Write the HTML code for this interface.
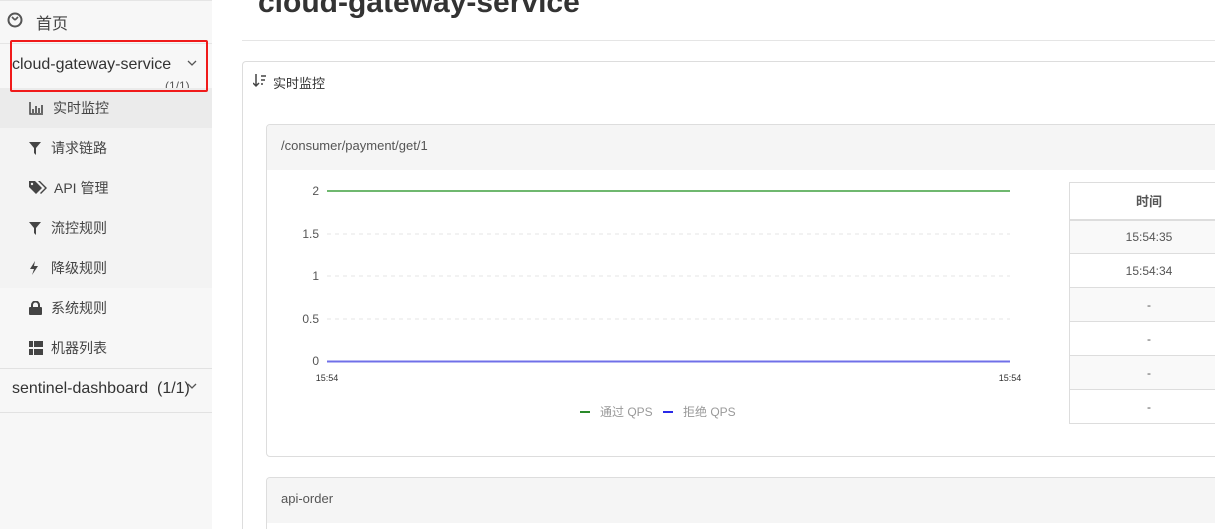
<!DOCTYPE html>
<html><head><meta charset="utf-8"><style>
*{margin:0;padding:0;box-sizing:border-box}
html,body{width:1215px;height:529px;overflow:hidden}
body{background:#fff;font-family:"Liberation Sans","Noto Sans CJK SC",sans-serif;color:#333;position:relative}
.a{position:absolute;white-space:nowrap}
.side{position:absolute;left:0;top:0;width:212px;height:529px;background:#f7f7f7}
.mi{position:absolute;left:0;width:212px;height:40px;font-size:14px;color:#444;line-height:40px}
.mi i{position:absolute;left:29px;top:13px;width:18px;height:14px;font-style:normal;line-height:0;display:block}
.mi i svg{display:block}
.mi span{position:absolute;left:51px}
td{border:1px solid #ddd;text-align:center;font-size:12px;color:#555;height:34px}
</style></head><body>
<div class="side">
 <div class="a" style="left:0;top:0;width:212px;height:1px;background:#e5e5e5"></div>
 <svg class="a" style="left:7px;top:12px" width="16" height="16"><circle cx="8" cy="8" r="6.5" stroke="#555" stroke-width="2" fill="none"/><path d="M8 8L5 5M8 8l3-3" stroke="#555" stroke-width="1.6"/></svg>
 <div class="a" style="left:36px;top:10px;font-size:16px;color:#444">首页</div>
 <div class="a" style="left:0;top:43px;width:212px;height:1px;background:#e5e5e5"></div>
 <div class="a" style="left:0;top:88px;width:212px;height:200px;background:#f3f3f3"></div>
 <div class="a" style="left:0;top:88px;width:212px;height:40px;background:#ebebeb"></div>
 <div class="a" style="left:12px;top:56px;font-size:16px;color:#333">cloud-gateway-service</div>
 <svg class="a" style="left:187px;top:60px" width="10" height="7"><path d="M1 1l4 4 4-4" stroke="#555" stroke-width="1.3" fill="none"/></svg>
 <div class="a" style="left:165px;top:79px;font-size:12px;color:#555;height:9px;overflow:hidden">(1/1)</div>
 <div class="a" style="left:10px;top:40px;width:198px;height:52px;border:2px solid #f01a1a;border-radius:2px"></div>
 <div class="mi" style="top:88px"><i><svg width="15" height="14"><path d="M1 1v12h13" stroke="#444" stroke-width="1.5" fill="none"/><path d="M4 8v4M7 5v7M10 7v5M13 4v8" stroke="#444" stroke-width="1.6"/></svg></i><span style="left:53px">实时监控</span></div>
 <div class="mi" style="top:128px"><i><svg width="12" height="14"><path d="M0 1h12L7 7v7L5 12V7z" fill="#444"/></svg></i><span>请求链路</span></div>
 <div class="mi" style="top:168px"><i><svg width="18" height="14"><path d="M0 0h6l7 7-6 6-7-7z" fill="#444"/><path d="M9 0h2l7 7-6 6-1-1 5-5z" fill="#444"/><circle cx="3" cy="3" r="1.2" fill="#f3f3f3"/></svg></i><span style="left:54px">API 管理</span></div>
 <div class="mi" style="top:208px"><i><svg width="12" height="14"><path d="M0 1h12L7 7v7L5 12V7z" fill="#444"/></svg></i><span>流控规则</span></div>
 <div class="mi" style="top:248px"><i><svg width="10" height="14"><path d="M6 0L1 8h4l-2 6 6-9H5z" fill="#444"/></svg></i><span>降级规则</span></div>
 <div class="mi" style="top:288px"><i><svg width="13" height="14"><rect x="0" y="6" width="13" height="8" rx="1" fill="#444"/><path d="M3 6V4a3.5 3.5 0 017 0v2" stroke="#444" stroke-width="2" fill="none"/></svg></i><span>系统规则</span></div>
 <div class="mi" style="top:328px"><i><svg width="14" height="14"><rect x="0" y="0" width="4" height="6" fill="#444"/><rect x="0" y="8" width="4" height="6" fill="#444"/><rect x="5" y="0" width="9" height="6" fill="#444"/><rect x="5" y="8" width="9" height="6" fill="#444"/></svg></i><span>机器列表</span></div>
 <div class="a" style="left:0;top:368px;width:212px;height:1px;background:#e2e2e2"></div>
 <div class="a" style="left:12px;top:380px;font-size:16px;color:#333">sentinel-dashboard&nbsp; (1/1)</div>
 <svg class="a" style="left:187px;top:383px" width="10" height="7"><path d="M1 1l4 4 4-4" stroke="#555" stroke-width="1.3" fill="none"/></svg>
 <div class="a" style="left:0;top:412px;width:212px;height:1px;background:#e2e2e2"></div>
</div>

<div class="a" style="left:258px;top:-14px;font-size:30px;font-weight:bold;color:#333">cloud-gateway-service</div>
<div class="a" style="left:242px;top:40px;width:973px;height:1px;background:#e5e5e5"></div>

<div class="a" style="left:242px;top:61px;width:990px;height:480px;border:1px solid #ddd;border-radius:4px;border-bottom:none"></div>
<svg class="a" style="left:253px;top:74px" width="14" height="14"><path d="M3 0v12M0 9l3 3 3-3" stroke="#444" stroke-width="1.5" fill="none"/><path d="M8 2h5M8 6h4M8 10h2" stroke="#444" stroke-width="1.5"/></svg>
<div class="a" style="left:273px;top:73px;font-size:13px;color:#333">实时监控</div>

<div class="a" style="left:266px;top:124px;width:960px;height:333px;border:1px solid #ddd;border-radius:4px;overflow:hidden">
 <div style="height:45px;background:#f5f5f5;font-size:13px;color:#555;line-height:42px;padding-left:14px">/consumer/payment/get/1</div>
</div>
<svg class="a" style="left:266px;top:170px" width="760" height="260">
 <g font-family="Liberation Sans" font-size="12" fill="#555" text-anchor="end">
  <text x="53" y="25">2</text><text x="53" y="68">1.5</text><text x="53" y="110">1</text><text x="53" y="153">0.5</text><text x="53" y="195">0</text>
 </g>
 <g stroke="#e6e6e6" stroke-dasharray="4,4"><line x1="61" y1="64" x2="744" y2="64"/><line x1="61" y1="106" x2="744" y2="106"/><line x1="61" y1="149" x2="744" y2="149"/></g>
 <line x1="61" y1="21" x2="744" y2="21" stroke="#6fb86f" stroke-width="2"/>
 <line x1="61" y1="191.5" x2="744" y2="191.5" stroke="#7070e8" stroke-width="2"/>
 <g font-family="Liberation Sans" font-size="9" fill="#333" text-anchor="middle"><text x="61" y="211">15:54</text><text x="744" y="211">15:54</text></g>
 <line x1="314" y1="242" x2="324" y2="242" stroke="#2a8a2a" stroke-width="2"/>
 <line x1="397" y1="242" x2="407" y2="242" stroke="#2a2ae8" stroke-width="2"/>
 <g font-family="Liberation Sans,Noto Sans CJK SC" font-size="12" fill="#999"><text x="334" y="246">通过 QPS</text><text x="417" y="246">拒绝 QPS</text></g>
</svg>
<table class="a" style="left:1069px;top:182px;width:160px;border-collapse:collapse">
 <tr><td style="height:37px;font-weight:bold;font-size:13px;border-bottom:2px solid #ddd">时间</td></tr>
 <tr><td style="background:#f9f9f9">15:54:35</td></tr>
 <tr><td>15:54:34</td></tr>
 <tr><td style="background:#f9f9f9">-</td></tr>
 <tr><td>-</td></tr>
 <tr><td style="background:#f9f9f9">-</td></tr>
 <tr><td>-</td></tr>
</table>

<div class="a" style="left:266px;top:477px;width:960px;height:52px;border:1px solid #ddd;border-bottom:none;border-radius:4px 4px 0 0;overflow:hidden">
 <div style="height:45px;background:#f5f5f5;font-size:13px;color:#555;line-height:42px;padding-left:14px">api-order</div>
</div>
</body></html>
